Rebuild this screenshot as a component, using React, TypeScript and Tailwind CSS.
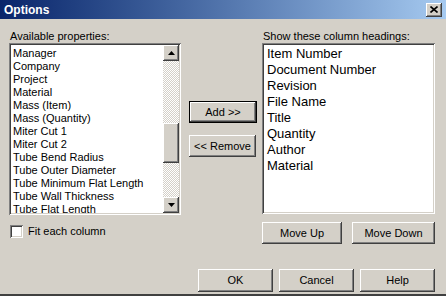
import React from "react";

const available = [
  "Manager",
  "Company",
  "Project",
  "Material",
  "Mass (Item)",
  "Mass (Quantity)",
  "Miter Cut 1",
  "Miter Cut 2",
  "Tube Bend Radius",
  "Tube Outer Diameter",
  "Tube Minimum Flat Length",
  "Tube Wall Thickness",
  "Tube Flat Length",
];

const shown = [
  "Item Number",
  "Document Number",
  "Revision",
  "File Name",
  "Title",
  "Quantity",
  "Author",
  "Material",
];

const raised =
  "bg-[#d4d0c8] shadow-[inset_-1px_-1px_#404040,inset_1px_1px_#ffffff,inset_-2px_-2px_#808080,inset_2px_2px_#d4d0c8]";
const sunken =
  "bg-white shadow-[inset_1px_1px_#808080,inset_-1px_-1px_#ffffff,inset_2px_2px_#404040,inset_-2px_-2px_#d4d0c8]";

function Button({ label, className = "", isDefault = false }: { label: string; className?: string; isDefault?: boolean }) {
  return (
    <div className={`h-[22px] ${isDefault ? "border border-black" : ""} ${className}`}>
      <div className={`w-full h-full flex items-center justify-center text-[11px] text-black ${raised}`}>
        {label}
      </div>
    </div>
  );
}

function Arrow({ up }: { up: boolean }) {
  return (
    <div className={`w-[16px] h-[16px] flex items-center justify-center ${raised}`}>
      <svg width="7" height="4" viewBox="0 0 7 4">
        {up ? <path d="M3.5 0 L7 4 L0 4 Z" fill="#000" /> : <path d="M0 0 L7 0 L3.5 4 Z" fill="#000" />}
      </svg>
    </div>
  );
}

export default function App() {
  return (
    <div
      className="w-[446px] h-[296px] bg-[#d4d0c8] flex flex-col border-b-2 border-[#404040] overflow-hidden"
      style={{ fontFamily: '"Liberation Sans", Arial, sans-serif' }}
    >
      {/* title bar */}
      <div className="h-[19px] shrink-0 flex items-center justify-between bg-linear-to-r from-[#0a246a] to-[#a6caf0] pl-[4px] pr-[4px]">
        <span className="text-white font-bold text-[12px] leading-none">Options</span>
        <div className={`w-[16px] h-[14px] flex items-center justify-center ${raised}`}>
          <svg width="8" height="7" viewBox="0 0 8 7">
            <path d="M0.5 0.5 L7.5 6.5 M7.5 0.5 L0.5 6.5" stroke="#000" strokeWidth="1.6" />
          </svg>
        </div>
      </div>

      <div className="flex pl-[9px] pt-[11px]">
        {/* left column */}
        <div className="w-[172px] flex flex-col">
          <div className="h-[13px] text-[11px] leading-[13px] pl-[1px] text-black">Available properties:</div>
          <div className={`h-[172px] flex p-[2px] ${sunken}`}>
            <div className="flex-1 overflow-hidden pl-[2px] pt-[2px]">
              {available.map((item) => (
                <div key={item} className="text-[11px] leading-[13px] text-black whitespace-nowrap">
                  {item}
                </div>
              ))}
            </div>
            <div className="w-[16px] flex flex-col bg-[repeating-conic-gradient(#d4d0c8_0%_25%,#ffffff_0%_50%)] bg-[length:2px_2px]">
              <Arrow up />
              <div className="h-[62px]" />
              <div className={`h-[40px] ${raised}`} />
              <div className="flex-1" />
              <Arrow up={false} />
            </div>
          </div>
          <div className="flex items-center mt-[10px] pl-[1px]">
            <div className={`w-[13px] h-[13px] ${sunken}`} />
            <span className="ml-[5px] text-[11px] leading-[13px] text-black">Fit each column</span>
          </div>
        </div>

        {/* middle buttons */}
        <div className="w-[68px] ml-[8px] flex flex-col pt-[71px]">
          <Button label="Add >>" isDefault />
          <Button label="<< Remove" className="mt-[12px] w-[67px]" />
        </div>

        {/* right column */}
        <div className="w-[173px] ml-[5px] flex flex-col">
          <div className="h-[13px] text-[11px] leading-[13px] pl-[1px] text-black">Show these column headings:</div>
          <div className={`h-[171px] p-[2px] ${sunken}`}>
            <div className="pl-[3px] pt-[1px]">
              {shown.map((item) => (
                <div key={item} className="text-[13px] leading-[16px] text-black whitespace-nowrap">
                  {item}
                </div>
              ))}
            </div>
          </div>
          <div className="flex mt-[8px] gap-[10px]">
            <Button label="Move Up" className="w-[80px]" />
            <Button label="Move Down" className="w-[83px]" />
          </div>
        </div>
      </div>

      <div className="flex justify-end gap-[6px] pr-[11px] mt-[25px]">
        <Button label="OK" className="w-[75px] h-[23px]" />
        <Button label="Cancel" className="w-[75px] h-[23px]" />
        <Button label="Help" className="w-[75px] h-[23px]" />
      </div>
    </div>
  );
}
